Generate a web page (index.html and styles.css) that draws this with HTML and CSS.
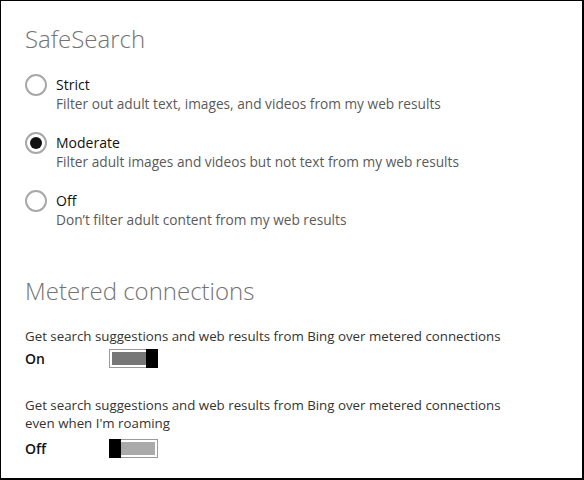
FILE: index.html
```html
<!DOCTYPE html>
<html lang="en">
<head>
<meta charset="utf-8">
<title>Search settings</title>
<link rel="stylesheet" href="styles.css">
</head>
<body>
<div class="panel">
  <section class="group">
    <h2 class="heading">SafeSearch</h2>
    <div class="options">
      <div class="option">
        <span class="radio"></span>
        <div class="option-text">
          <div class="option-title">Strict</div>
          <div class="option-desc">Filter out adult text, images, and videos from my web results</div>
        </div>
      </div>
      <div class="option">
        <span class="radio checked"></span>
        <div class="option-text">
          <div class="option-title">Moderate</div>
          <div class="option-desc">Filter adult images and videos but not text from my web results</div>
        </div>
      </div>
      <div class="option">
        <span class="radio"></span>
        <div class="option-text">
          <div class="option-title">Off</div>
          <div class="option-desc">Don’t filter adult content from my web results</div>
        </div>
      </div>
    </div>
  </section>
  <section class="group metered">
    <h2 class="heading">Metered connections</h2>
    <div class="setting">
      <div class="setting-desc">Get search suggestions and web results from Bing over metered connections</div>
      <div class="toggle-row">
        <span class="toggle-label">On</span>
        <span class="toggle on"><span class="thumb"></span></span>
      </div>
    </div>
    <div class="setting">
      <div class="setting-desc">Get search suggestions and web results from Bing over metered connections<br>even when I'm roaming</div>
      <div class="toggle-row spaced">
        <span class="toggle-label">Off</span>
        <span class="toggle off"><span class="thumb"></span></span>
      </div>
    </div>
  </section>
</div>
</body>
</html>
```

FILE: styles.css
```css
html, body {
  margin: 0;
  padding: 0;
  background: #fff;
}
.panel {
  width: 584px;
  height: 480px;
  box-sizing: border-box;
  border-top: 1px solid #000;
  border-left: 1px solid #000;
  border-right: 2px solid #000;
  border-bottom: 2px solid #000;
  padding: 20px 0 0 24px;
  font-family: "Open Sans", "Noto Sans", sans-serif;
  font-size: 14px;
  color: #222;
}
.heading {
  margin: 0;
  font-weight: 300;
  font-size: 24px;
  line-height: 36px;
  color: #737373;
}
.options {
  display: flex;
  flex-direction: column;
  gap: 19px;
  margin-top: 18px;
}
.option {
  display: flex;
  gap: 9px;
  align-items: flex-start;
}
.radio {
  width: 18px;
  height: 18px;
  border: 2px solid #a8a8a8;
  border-radius: 50%;
  display: flex;
  align-items: center;
  justify-content: center;
  margin-top: -1px;
  flex: none;
}
.radio.checked::after {
  content: "";
  width: 12px;
  height: 12px;
  border-radius: 50%;
  background: #111;
}
.option-title {
  font-size: 14px;
  line-height: 19px;
  color: #111;
}
.option-desc {
  font-size: 13.7px;
  line-height: 20px;
  color: #5a5a5a;
}
.metered {
  margin-top: 43px;
}
.metered .heading {
  margin-bottom: 18px;
}
.setting {
  display: flex;
  flex-direction: column;
  margin-bottom: 28px;
}
.setting-desc {
  font-size: 13.3px;
  line-height: 18px;
  color: #333;
}
.toggle-row {
  display: flex;
  align-items: center;
  margin-top: 4px;
}
.toggle-row.spaced {
  margin-top: 7px;
}
.toggle-label {
  width: 84px;
  font-size: 14px;
  font-weight: 600;
  color: #111;
}
.toggle {
  width: 47px;
  height: 17px;
  border: 1px solid #9a9a9a;
  display: flex;
  box-sizing: content-box;
  box-shadow: inset 0 0 0 2px #fff;
}
.toggle.on {
  background: #777;
  justify-content: flex-end;
}
.toggle.off {
  background: #aaa;
  justify-content: flex-start;
}
.thumb {
  width: 12px;
  height: 19px;
  margin: -1px;
  background: #000;
}
```
